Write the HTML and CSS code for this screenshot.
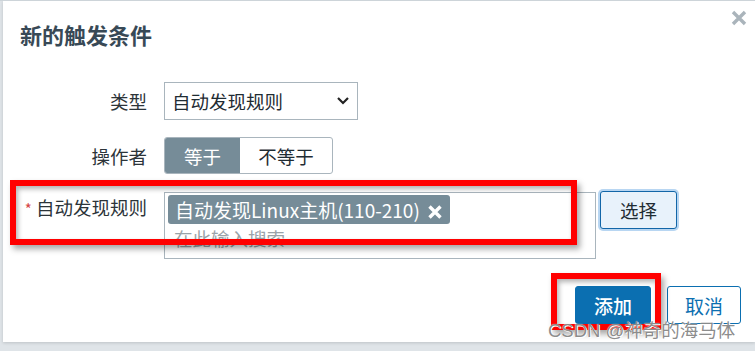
FILE: index.html
```html
<!DOCTYPE html>
<html lang="zh-CN">
<head>
    <meta charset="UTF-8">
    <title>新的触发条件</title>
    <link rel="stylesheet" href="styles.css">
</head>
<body>
    <div class="backdrop">
        <div class="dialog">
            <div class="dialogHead">
                <h2>新的触发条件</h2>
                <span class="closeBtn">
                    <svg width="16" height="16" viewBox="0 0 16 16"><path d="M2 2 L14 14 M14 2 L2 14" stroke="#aab4bb" stroke-width="3.4"/></svg>
                </span>
            </div>
            <div class="formGrid">
                <label class="rowLabel">类型</label>
                <div class="field">
                    <div class="selectBox">
                        <span>自动发现规则</span>
                        <svg width="14" height="10" viewBox="0 0 14 10"><path d="M2 2 L7 7 L12 2" fill="none" stroke="#222" stroke-width="2.2"/></svg>
                    </div>
                </div>

                <label class="rowLabel">操作者</label>
                <div class="field">
                    <div class="segmented">
                        <span class="seg active">等于</span>
                        <span class="seg">不等于</span>
                    </div>
                </div>

                <label class="rowLabel topLabel"><span class="req">*</span> 自动发现规则</label>
                <div class="field multiRow">
                    <div class="multiBox">
                        <span class="tag">自动发现Linux主机(110-210)
                            <svg class="tagX" width="14" height="14" viewBox="0 0 14 14"><path d="M1.5 1.5 L12.5 12.5 M12.5 1.5 L1.5 12.5" stroke="#fff" stroke-width="3.4"/></svg>
                        </span>
                        <div class="placeholder">在此输入搜索</div>
                    </div>
                    <button class="pickBtn">选择</button>
                </div>
            </div>
            <div class="dialogFoot">
                <button class="btnMain">添加</button>
                <button class="btnAlt">取消</button>
            </div>

            <div class="markBox markRule"></div>
            <div class="markBox markAdd"></div>
            <div class="watermark">CSDN @神奇的海马体</div>
        </div>
        <div class="underLink">&nbsp;</div>
    </div>
</body>
</html>
```

FILE: styles.css
```css
body {
    margin: 0;
    background-color: #dfe4e8;
    font-family: "Noto Sans CJK SC", "Noto Sans", sans-serif;
    color: #1f2c33;
    overflow: hidden;
}
.backdrop {
    width: 755px;
    height: 351px;
    border-top: 1px solid #cdd4d9;
    box-sizing: border-box;
    position: relative;
    overflow: hidden;
}
.dialog {
    position: relative;
    margin-left: 3px;
    width: 752px;
    height: 341px;
    background-color: white;
    box-shadow: 0 1px 3px rgba(0, 0, 0, 0.15);
}
.dialogHead {
    display: flex;
    justify-content: space-between;
    align-items: flex-start;
    padding: 17px 8px 0 17px;
}
.dialogHead h2 {
    margin: 0;
    font-size: 22px;
    line-height: 32px;
    font-weight: bold;
    color: #384956;
}
.closeBtn {
    display: block;
    line-height: 0;
    margin-top: -8px;
}
.formGrid {
    display: grid;
    grid-template-columns: 144px 1fr;
    column-gap: 17px;
    row-gap: 17px;
    margin-top: 32px;
}
.rowLabel {
    text-align: right;
    font-size: 18.5px;
    align-self: center;
    color: #2c3439;
}
.topLabel {
    align-self: start;
    padding-top: 3px;
}
.req {
    color: #d64545;
    font-size: 15px;
}
.field {
    display: flex;
}
.selectBox {
    width: 194px;
    height: 38px;
    box-sizing: border-box;
    border: 1px solid #a9b5bd;
    display: flex;
    align-items: center;
    justify-content: space-between;
    padding: 0 7px 0 7px;
    font-size: 18.5px;
}
.segmented {
    display: flex;
    height: 37px;
    border: 1px solid #a9b5bd;
    border-radius: 3px;
    box-sizing: border-box;
    overflow: hidden;
}
.seg {
    display: flex;
    align-items: center;
    justify-content: center;
    font-size: 18.5px;
    width: 92px;
}
.seg.active {
    width: 75px;
    background-color: #768c98;
    color: white;
}
.multiRow {
    margin-top: 1px;
    gap: 4px;
    align-items: flex-start;
}
.multiBox {
    width: 432px;
    height: 67px;
    box-sizing: border-box;
    border: 1px solid #a9b5bd;
    padding: 2px 3px;
}
.tag {
    display: inline-block;
    background-color: #768c98;
    color: white;
    font-size: 19px;
    line-height: 29px;
    padding: 0 8px 0 7px;
    border-radius: 3px;
}
.tagX {
    margin-left: 4px;
    vertical-align: -1px;
}
.placeholder {
    color: #9aa3a9;
    font-size: 18.5px;
    line-height: 28px;
    padding-left: 6px;
}
.pickBtn {
    width: 77px;
    height: 38px;
    margin-top: -1px;
    font-family: inherit;
    font-size: 18.5px;
    color: #1f2c33;
    background-color: #e8f2fb;
    border: 1px solid #1266a8;
    border-radius: 3px;
    box-shadow: 0 0 0 2px #b8d6f2;
}
.dialogFoot {
    display: flex;
    justify-content: flex-end;
    gap: 16px;
    padding: 27px 14px 0 0;
}
.dialogFoot button {
    font-family: inherit;
    font-size: 19px;
    height: 38px;
    border-radius: 3px;
}
.btnMain {
    width: 76px;
    background-color: #0b6fb1;
    color: white;
    border: 1px solid #0b6fb1;
    font-weight: 500;
}
.btnAlt {
    width: 74px;
    background-color: white;
    color: #0b6fb1;
    border: 1px solid #0b6fb1;
}
.markBox {
    position: absolute;
    border: 6px solid #ff0000;
    box-sizing: border-box;
    box-shadow: 3px 4px 6px rgba(0, 0, 0, 0.35), inset 2px 3px 5px rgba(0, 0, 0, 0.3);
}
.markRule {
    left: 7px;
    top: 179px;
    width: 567px;
    height: 65px;
}
.markAdd {
    left: 548px;
    top: 272px;
    width: 110px;
    height: 57px;
}
.watermark {
    position: absolute;
    left: 545px;
    top: 315px;
    font-family: "Liberation Sans", "Noto Sans CJK SC", sans-serif;
    font-size: 18.5px;
    color: rgba(110, 110, 110, 0.8);
    text-shadow: 0 0 1px white, 1px 1px 0 white;
}
.underLink {
    position: absolute;
    left: 405px;
    top: 345px;
    width: 60px;
    border-bottom: 1px dotted #5a8fc7;
}
```
